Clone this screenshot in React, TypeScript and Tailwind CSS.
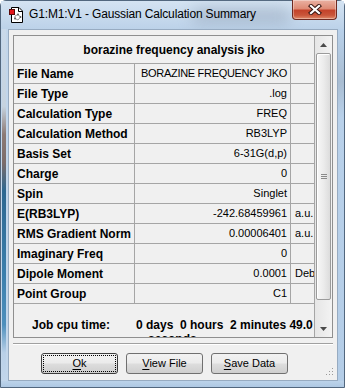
import React from "react";

const rows = [
  { label: "File Name", value: "BORAZINE FREQUENCY JKO", unit: "" },
  { label: "File Type", value: ".log", unit: "" },
  { label: "Calculation Type", value: "FREQ", unit: "" },
  { label: "Calculation Method", value: "RB3LYP", unit: "" },
  { label: "Basis Set", value: "6-31G(d,p)", unit: "" },
  { label: "Charge", value: "0", unit: "" },
  { label: "Spin", value: "Singlet", unit: "" },
  { label: "E(RB3LYP)", value: "-242.68459961", unit: "a.u." },
  { label: "RMS Gradient Norm", value: "0.00006401", unit: "a.u." },
  { label: "Imaginary Freq", value: "0", unit: "" },
  { label: "Dipole Moment", value: "0.0001", unit: "Debye" },
  { label: "Point Group", value: "C1", unit: "" },
];

function AppIcon() {
  return (
    <svg width="16" height="16" viewBox="0 0 16 16" className="shrink-0">
      <path d="M3.5 0.5H11L14.5 4V15.5H3.5Z" fill="#fff" stroke="#000" />
      <path d="M10.5 0.5V4.5H14.5" fill="none" stroke="#000" />
      <path d="M7 9L10 7.5L12.5 10L10 13L7 11.5Z" fill="none" stroke="#8a8a8a" strokeWidth="0.9" />
      <circle cx="10" cy="7.5" r="0.9" fill="#555" />
      <circle cx="7" cy="11.5" r="0.9" fill="#555" />
      <circle cx="12.5" cy="10" r="0.9" fill="#555" />
      <rect x="1.5" y="2.5" width="5" height="5" fill="#e3151a" stroke="#5a0a0a" />
    </svg>
  );
}

function CloseButton() {
  return (
    <div className="ml-auto mr-[7px] -mt-[1px] flex h-[20px] w-[45px] shrink-0 items-center justify-center rounded-b-[4px] border border-t-0 border-[#6e2a22] bg-[linear-gradient(to_bottom,#eab1a2_0%,#de8b76_45%,#c4432b_55%,#c9553a_80%,#e08a6a_100%)] shadow-[inset_0_0_0_1px_rgba(255,255,255,0.35)]">
      <svg width="14" height="11" viewBox="0 0 14 11">
        <path d="M3 2L11 9M11 2L3 9" stroke="#3a1713" strokeWidth="4.2" strokeLinecap="square" />
        <path d="M3 2L11 9M11 2L3 9" stroke="#fff" strokeWidth="2.2" strokeLinecap="square" />
      </svg>
    </div>
  );
}

function Scrollbar() {
  return (
    <div className="flex w-[17px] flex-col bg-[linear-gradient(to_right,#e6e6e6,#f3f3f3)]">
      <div className="flex h-[17px] items-center justify-center">
        <svg width="7" height="4" viewBox="0 0 7 4">
          <path d="M0 4L3.5 0L7 4Z" fill="#4a4a4a" />
        </svg>
      </div>
      <div className="mx-[1px] flex h-[247px] items-center justify-center rounded-[2px] border border-[#9b9b9b] bg-[linear-gradient(to_right,#f7f7f7_0%,#ececec_50%,#dcdcdc_100%)] shadow-[inset_1px_1px_0_#ffffff]">
        <div className="flex flex-col gap-[1px]">
          <div className="h-[1px] w-[6px] bg-[#8a8a8a]" />
          <div className="h-[1px] w-[6px] bg-[#8a8a8a]" />
          <div className="h-[1px] w-[6px] bg-[#8a8a8a]" />
        </div>
      </div>
      <div className="flex-1" />
      <div className="flex h-[17px] items-center justify-center">
        <svg width="7" height="4" viewBox="0 0 7 4">
          <path d="M0 0L3.5 4L7 0Z" fill="#4a4a4a" />
        </svg>
      </div>
    </div>
  );
}

function Button({ label, hot, isDefault }: { label: string; hot: number; isDefault?: boolean }) {
  return (
    <div
      className={`relative flex h-[21px] w-[77px] items-center justify-center rounded-[3px] border bg-[linear-gradient(to_bottom,#f2f2f2_0%,#ebebeb_48%,#dddddd_52%,#cfcfcf_100%)] text-[11px] text-black ${
        isDefault ? "border-[#3c3c3c]" : "border-[#707070]"
      }`}
    >
      {isDefault && <div className="absolute inset-[1px] rounded-[1px] border border-dotted border-black" />}
      <span>
        {label.slice(0, hot)}
        <span className="underline underline-offset-[2px]">{label.slice(hot, hot + 1)}</span>
        {label.slice(hot + 1)}
      </span>
    </div>
  );
}

export default function App() {
  return (
    <div className="h-[388px] w-[345px] overflow-hidden font-['Liberation_Sans',Arial,sans-serif] text-black">
      <div className="flex h-full w-full flex-col rounded-t-[6px] border border-[#52677e] bg-[#b9d0e8]">
        {/* Title bar */}
        <div className="relative flex h-[28px] shrink-0 items-start bg-[linear-gradient(to_bottom,#d4e3f2,#bcd2e9)]">
          <div className="absolute left-[190px] top-[6px] h-[18px] w-[100px] rounded-full bg-[#8d9cae]/40 blur-[7px]" />
          <div className="relative ml-[7px] mt-[6px]">
            <AppIcon />
          </div>
          <div className="relative ml-[5px] mt-[5px] text-[12px] leading-[16px] tracking-[-0.15px] text-black">
            G1:M1:V1 - Gaussian Calculation Summary
          </div>
          <div className="relative ml-auto flex">
            <CloseButton />
          </div>
        </div>

        <div className="flex h-[352px] shrink-0">
          {/* left frame */}
          <div className="flex w-[7px] shrink-0 bg-[#c2d6eb]">
            <div className="ml-[1px] w-[4px] bg-[linear-gradient(to_bottom,#c9d9ea_0%,#c6d3df_22%,#8c7a74_30%,#7b6c6b_38%,#2d6790_46%,#3b7fad_70%,#4e8fbc_84%,#b9d0e8_92%,#c2d6eb_100%)]" />
          </div>

          {/* client area */}
          <div className="relative flex w-[330px] shrink-0 flex-col border border-[#97abc1] bg-[#f0f0f0]">
            <div className="ml-[4px] mt-[5px] flex h-[303px] w-[320px] border border-[#8f8f8f]">
              <div className="w-[301px] overflow-hidden border-r border-[#a5a5a5]">
                <div className="flex h-[28px] items-center justify-center border-b border-[#a5a5a5] pl-[20px] text-[12px] font-bold">
                  borazine frequency analysis jko
                </div>
                {rows.map((r) => (
                  <div key={r.label} className="flex h-[20px] border-b border-[#a5a5a5]">
                    <div className="flex w-[121px] items-center border-r border-[#a5a5a5] pl-[3px] text-[12px] font-bold whitespace-nowrap">
                      {r.label}
                    </div>
                    <div
                      className={`flex w-[156px] items-center justify-end border-r border-[#a5a5a5] pr-[3px] text-[11px] whitespace-nowrap ${
                        r.label === "File Name" ? "tracking-[-0.3px]" : ""
                      }`}
                    >
                      {r.value}
                    </div>
                    <div className="flex w-[23px] items-center overflow-hidden pl-[4px] text-[11px] whitespace-nowrap">
                      {r.unit}
                    </div>
                  </div>
                ))}
                <div className="flex h-[33px] pt-[14px] text-[12px] font-bold leading-[14px]">
                  <div className="w-[121px] pl-[18px]">Job cpu time:</div>
                  <div className="pl-[1px]">
                    <div className="whitespace-pre">0 days  0 hours  2 minutes 49.0</div>
                    <div className="pl-[12px]">seconds</div>
                  </div>
                </div>
              </div>
              <Scrollbar />
            </div>

            <div className="ml-[4px] mt-[5px] h-[2px] w-[320px] border-t border-b border-t-[#a0a0a0] border-b-white" />

            <div className="ml-[32px] mt-[8px] flex gap-[8px]">
              <Button label="Ok" hot={0} isDefault />
              <Button label="View File" hot={0} />
              <Button label="Save Data" hot={0} />
            </div>

            <svg className="absolute bottom-[4px] right-[3px]" width="9" height="9" viewBox="0 0 9 9">
              <rect x="7" y="1" width="1" height="1" fill="#9a9a9a" />
              <rect x="7" y="4" width="1" height="1" fill="#9a9a9a" />
              <rect x="4" y="4" width="1" height="1" fill="#9a9a9a" />
              <rect x="7" y="7" width="1" height="1" fill="#9a9a9a" />
              <rect x="4" y="7" width="1" height="1" fill="#9a9a9a" />
              <rect x="1" y="7" width="1" height="1" fill="#9a9a9a" />
            </svg>
          </div>

          {/* right frame */}
          <div className="w-[6px] shrink-0 bg-[linear-gradient(to_bottom,#b9d1ea_0%,#a9bdd2_15%,#b9d1ea_25%,#b4cde7_100%)]" />
        </div>

        {/* bottom frame */}
        <div className="flex-1 bg-[linear-gradient(to_bottom,#bcd3ea,#aec8e3)]" />
      </div>
    </div>
  );
}
